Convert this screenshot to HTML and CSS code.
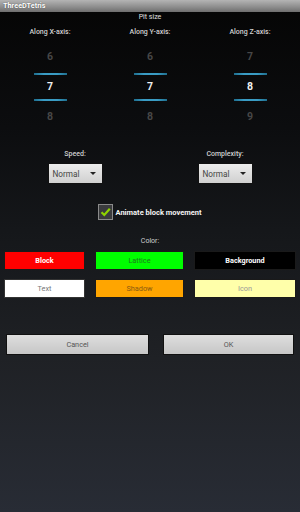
FILE: index.html
```html
<!DOCTYPE html>
<html>
<head>
<meta charset="utf-8">
<title>ThreeDTetris</title>
<link rel="stylesheet" href="styles.css">
</head>
<body>
  <div class="titlebar">ThreeDTetris</div>

  <div class="pit-title">Pit size</div>

  <div class="axes">
    <div class="axis">
      <div class="axis-label">Along X-axis:</div>
      <div class="num prev">6</div>
      <div class="rule"></div>
      <div class="num cur">7</div>
      <div class="rule"></div>
      <div class="num next">8</div>
    </div>
    <div class="axis">
      <div class="axis-label">Along Y-axis:</div>
      <div class="num prev">6</div>
      <div class="rule"></div>
      <div class="num cur">7</div>
      <div class="rule"></div>
      <div class="num next">8</div>
    </div>
    <div class="axis">
      <div class="axis-label">Along Z-axis:</div>
      <div class="num prev">7</div>
      <div class="rule"></div>
      <div class="num cur">8</div>
      <div class="rule"></div>
      <div class="num next">9</div>
    </div>
  </div>

  <div class="options">
    <div class="option">
      <div class="option-label">Speed:</div>
      <div class="spinner"><span>Normal</span><i class="arrow"></i></div>
    </div>
    <div class="option">
      <div class="option-label">Complexity:</div>
      <div class="spinner"><span>Normal</span><i class="arrow"></i></div>
    </div>
  </div>

  <div class="check-row">
    <span class="checkbox">
      <svg width="11" height="10" viewBox="0 0 11 10">
        <path d="M1.5 5.2 L4.3 8 L9.8 1.8" fill="none" stroke="#8fd400" stroke-width="2.2"/>
      </svg>
    </span>
    <span class="check-text">Animate block movement</span>
  </div>

  <div class="color-title">Color:</div>

  <div class="colors">
    <div class="swatch block">Block</div>
    <div class="swatch lattice">Lattice</div>
    <div class="swatch background">Background</div>
    <div class="swatch text">Text</div>
    <div class="swatch shadow">Shadow</div>
    <div class="swatch icon">Icon</div>
  </div>

  <div class="actions">
    <div class="btn cancel">Cancel</div>
    <div class="btn ok">OK</div>
  </div>
</body>
</html>
```

FILE: styles.css
```css
html {
  height: 100%;
}
body {
  margin: 0;
  width: 300px;
  height: 512px;
  overflow: hidden;
  background: linear-gradient(#050505 0, #0c0d0f 25%, #15171a 45%, #1f2125 70%, #282c35 100%);
  color: #d8d8d8;
  font-family: Roboto, "Liberation Sans", sans-serif;
  font-size: 7px;
}
.titlebar {
  height: 12px;
  line-height: 12px;
  padding-left: 3px;
  background: linear-gradient(#b4b4b4, #8c8c8c 60%, #6e6e6e);
  color: #fff;
  font-weight: bold;
  font-size: 7.3px;
  text-shadow: 0 0 1px #333;
}
.pit-title {
  height: 10px;
  line-height: 10px;
  text-align: center;
  color: #e0e0e0;
}
.axes {
  display: grid;
  grid-template-columns: 100px 100px 100px;
}
.axis {
  display: flex;
  flex-direction: column;
  align-items: center;
}
.axis-label {
  height: 10px;
  line-height: 10px;
  margin-top: 5px;
  color: #d0d0d0;
  font-weight: 500;
}
.num {
  height: 20px;
  line-height: 20px;
  font-size: 10.5px;
  font-weight: bold;
  color: #474747;
}
.num.prev {
  margin-top: 10px;
  margin-bottom: 6px;
}
.num.cur {
  margin: 2px 0;
  color: #f0f0f0;
}
.num.next {
  margin-top: 6px;
}
.rule {
  width: 33px;
  height: 2px;
  background: linear-gradient(90deg, #1f6f8f, #3a9cc4 30%, #3a9cc4 70%, #1f6f8f);
}
.options {
  display: grid;
  grid-template-columns: 150px 150px;
}
.option {
  display: flex;
  flex-direction: column;
  align-items: center;
}
.option-label {
  height: 10px;
  line-height: 10px;
  margin-top: 22px;
  color: #d0d0d0;
  font-weight: 500;
}
.spinner {
  box-sizing: border-box;
  width: 55px;
  height: 21px;
  margin-top: 4px;
  padding: 0 6px 0 4px;
  display: flex;
  align-items: center;
  justify-content: space-between;
  border: 1px solid #111;
  border-radius: 1px;
  background: linear-gradient(#ececec, #d0d0d0);
  color: #444;
  font-size: 8.2px;
}
.arrow {
  width: 0;
  height: 0;
  border-left: 3px solid transparent;
  border-right: 3px solid transparent;
  border-top: 3px solid #222;
}
.check-row {
  margin-top: 20px;
  height: 16px;
  display: flex;
  justify-content: center;
  align-items: center;
}
.checkbox {
  box-sizing: border-box;
  width: 15px;
  height: 16px;
  display: flex;
  align-items: center;
  justify-content: center;
  border: 1px solid #8a8a8a;
  background: #3a3b3d;
}
.check-text {
  margin-left: 2px;
  color: #f4f4f4;
  font-weight: bold;
  font-size: 7.5px;
}
.color-title {
  height: 10px;
  line-height: 10px;
  margin-top: 16px;
  text-align: center;
  color: #d0d0d0;
}
.colors {
  display: grid;
  grid-template-columns: 81px 89px 102px;
  grid-auto-rows: 19px;
  gap: 9px 10px;
  margin: 5px 4px 0;
  font-size: 7.3px;
}
.swatch {
  box-sizing: border-box;
  display: flex;
  align-items: center;
  justify-content: center;
  border: 1px solid #1a1a1a;
}
.swatch.block {
  background: #ff0000;
  color: #fff;
  font-weight: bold;
}
.swatch.lattice {
  background: #00ff00;
  color: #1e7a1e;
}
.swatch.background {
  background: #000;
  color: #fff;
  font-weight: bold;
}
.swatch.text {
  background: #fff;
  color: #777;
  border-color: #333;
}
.swatch.shadow {
  background: #ffa500;
  color: #8a5a10;
}
.swatch.icon {
  background: #ffffaa;
  color: #999;
}
.actions {
  display: grid;
  grid-template-columns: 143px 131px;
  justify-content: space-between;
  margin: 36px 6px 0;
}
.btn {
  box-sizing: border-box;
  height: 21px;
  display: flex;
  align-items: center;
  justify-content: center;
  border: 1px solid #111;
  background: linear-gradient(#dedede, #c6c6c6);
  color: #555;
  font-size: 7.3px;
}
```
